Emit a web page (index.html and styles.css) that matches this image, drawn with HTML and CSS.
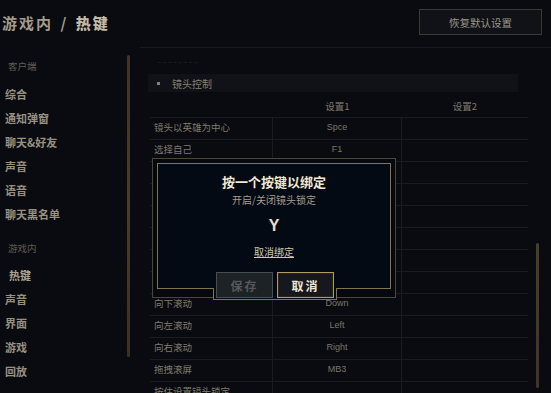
FILE: index.html
```html
<!DOCTYPE html>
<html lang="zh-CN">
<head>
<meta charset="utf-8">
<title>游戏内 / 热键</title>
<link rel="stylesheet" href="styles.css">
</head>
<body>
<header class="top">
  <h1 class="title">游戏内 / <b>热键</b></h1>
  <button class="reset">恢复默认设置</button>
</header>
<div class="main">
  <aside class="side">
    <nav class="nav">
      <div class="nav-label">客户端</div>
      <div class="nav-item">综合</div>
      <div class="nav-item">通知弹窗</div>
      <div class="nav-item">聊天&amp;好友</div>
      <div class="nav-item">声音</div>
      <div class="nav-item">语音</div>
      <div class="nav-item">聊天黑名单</div>
      <div class="nav-label second">游戏内</div>
      <div class="nav-item active">热键</div>
      <div class="nav-item">声音</div>
      <div class="nav-item">界面</div>
      <div class="nav-item">游戏</div>
      <div class="nav-item">回放</div>
    </nav>
    <div class="side-bar"></div>
  </aside>
  <section class="content">
    <div class="list">
      <div class="faint">- - - - - - - -</div>
      <div class="group"><span class="dot"></span>镜头控制</div>
      <div class="thead">
        <span></span><span>设置1</span><span>设置2</span>
      </div>
      <div class="row"><span class="name">镜头以英雄为中心</span><span class="key">Spce</span><span></span></div>
      <div class="row"><span class="name">选择自己</span><span class="key">F1</span><span></span></div>
      <div class="row"><span class="name">选择队友1</span><span class="key">F2</span><span></span></div>
      <div class="row"><span class="name">选择队友2</span><span class="key">F3</span><span></span></div>
      <div class="row"><span class="name">选择队友3</span><span class="key">F4</span><span></span></div>
      <div class="row"><span class="name">选择队友4</span><span class="key">F5</span><span></span></div>
      <div class="row"><span class="name">开启/关闭镜头锁定</span><span class="key">Y</span><span></span></div>
      <div class="row"><span class="name">向上滚动</span><span class="key">Up</span><span></span></div>
      <div class="row"><span class="name">向下滚动</span><span class="key">Down</span><span></span></div>
      <div class="row"><span class="name">向左滚动</span><span class="key">Left</span><span></span></div>
      <div class="row"><span class="name">向右滚动</span><span class="key">Right</span><span></span></div>
      <div class="row"><span class="name">拖拽滚屏</span><span class="key">MB3</span><span></span></div>
      <div class="row"><span class="name">按住设置镜头锁定</span><span class="key"></span><span></span></div>
    </div>
    <div class="track"><div class="thumb"></div></div>
  </section>
</div>

<div class="modal">
  <div class="modal-inner">
    <div class="m-title">按一个按键以绑定</div>
    <div class="m-sub">开启/关闭镜头锁定</div>
    <div class="m-key">Y</div>
    <div class="m-unbind">取消绑定</div>
  </div>
  <div class="m-actions">
    <button class="btn save">保存</button>
    <button class="btn cancel">取消</button>
  </div>
</div>
</body>
</html>
```

FILE: styles.css
```css
* { box-sizing: border-box; }
html, body { margin: 0; padding: 0; }
body {
  width: 551px;
  height: 393px;
  overflow: hidden;
  position: relative;
  background: #0a0b10;
  font-family: "Noto Sans CJK SC", "Noto Sans", sans-serif;
  color: #8c877a;
}

.top {
  height: 47px;
  padding: 0 9px 3px 2px;
  display: flex;
  align-items: center;
  justify-content: space-between;
}
.title {
  margin: 0;
  font-size: 15px;
  font-weight: 700;
  color: #a39c8a;
  letter-spacing: 2px;
  word-spacing: 2px;
}
.title b { color: #c2bba7; }
.reset {
  width: 123px;
  height: 26px;
  border: 1px solid #3a3932;
  background: #111218;
  color: #9c9788;
  font-family: inherit;
  font-size: 10.5px;
  padding: 0;
}

.main { display: flex; height: 346px; }

.side { width: 140px; display: flex; }
.nav { width: 127px; padding: 7px 0 0 5px; }
.nav-label {
  height: 24px;
  line-height: 24px;
  padding-left: 3px;
  font-size: 9.5px;
  color: #5e5b53;
  margin-bottom: 4px;
}
.nav-label.second { margin-top: 10px; margin-bottom: 3px; }
.nav-item {
  height: 24px;
  line-height: 24px;
  font-size: 11px;
  font-weight: 700;
  color: #979180;
}
.nav-item.active { padding-left: 4px; color: #aaa390; }
.side-bar {
  width: 3px;
  height: 302px;
  margin-top: 8px;
  border-radius: 2px;
  background: linear-gradient(#3e3526, #4a3d29 50%, #3a3124);
}

.content {
  flex: 1;
  display: flex;
  border-top: 1px solid #18191e;
}
.list { width: 388px; padding-left: 8px; }
.faint {
  margin-top: 8px;
  height: 12px;
  line-height: 12px;
  padding-left: 10px;
  font-size: 9px;
  color: #25262b;
}
.group {
  margin-top: 6px;
  width: 370px;
  height: 18px;
  display: flex;
  align-items: center;
  background: #111217;
  font-size: 10px;
  color: #858073;
  padding-left: 9px;
}
.dot {
  width: 3px;
  height: 3px;
  background: #858073;
  margin-right: 12px;
}
.thead, .row {
  margin-left: 2px;
  width: 378px;
  display: grid;
  grid-template-columns: 123px 129px 126px;
}
.thead {
  height: 26px;
  padding-top: 3px;
  align-items: center;
  border-bottom: 1px solid #1b1c22;
  font-size: 9.5px;
  color: #7f7a6e;
  text-align: center;
}
.row {
  height: 22px;
  border-bottom: 1px solid #1b1c22;
  font-size: 9.5px;
  align-items: center;
}
.row span { height: 100%; display: flex; align-items: center; padding-bottom: 3px; }
.row span:not(:last-child) { border-right: 1px solid #1b1c22; }
.name { padding-left: 4px; color: #7f7a6e; }
.key {
  justify-content: center;
  color: #7a7569;
  font-family: "Liberation Sans", "Noto Sans", sans-serif;
  font-size: 9px;
}

.track { margin-left: 8px; width: 3px; }
.thumb {
  margin-top: 195px;
  height: 145px;
  width: 3px;
  border-radius: 2px;
  background: linear-gradient(#4a3e2a, #3f3525);
}

.modal {
  position: absolute;
  left: 152px;
  top: 158px;
  width: 244px;
  height: 140px;
  border: 1px solid #4d4535;
  padding: 4px;
  background: #05090f;
}
.modal-inner {
  height: 126px;
  border: 1px solid #84734b;
  background: #030a14;
  display: flex;
  flex-direction: column;
  align-items: center;
}
.m-title {
  margin-top: 9px;
  line-height: 18px;
  font-size: 13px;
  font-weight: 700;
  color: #efe6d2;
}
.m-sub {
  margin-top: 2px;
  line-height: 14px;
  font-size: 10px;
  color: #a39d8d;
}
.m-key {
  margin-top: 9px;
  line-height: 20px;
  font-size: 16px;
  font-weight: 700;
  color: #e6e0d0;
  font-family: "Liberation Sans", sans-serif;
}
.m-unbind {
  margin-top: 9px;
  line-height: 14px;
  font-size: 10px;
  color: #d0c6ad;
  text-decoration: underline;
}
.m-actions {
  position: absolute;
  left: 60px;
  top: 113px;
  width: 124px;
  height: 27px;
  display: flex;
  justify-content: center;
  gap: 4px;
}
.m-actions::before {
  content: "";
  position: absolute;
  left: 0;
  right: 0;
  top: 16px;
  bottom: -1px;
  border: 1px solid #84734b;
  border-top: none;
  background: #030a14;
}
.btn {
  position: relative;
  width: 57px;
  height: 26px;
  padding: 0;
  font-family: inherit;
  font-size: 12px;
  font-weight: 700;
  letter-spacing: 2px;
}
.save {
  background: #1d2227;
  border: 1px solid #484d52;
  color: #57585a;
}
.cancel {
  background: #16181d;
  border: 1px solid #b39a62;
  box-shadow: inset 0 0 0 1px #2a2417;
  color: #efe6d2;
}
```
